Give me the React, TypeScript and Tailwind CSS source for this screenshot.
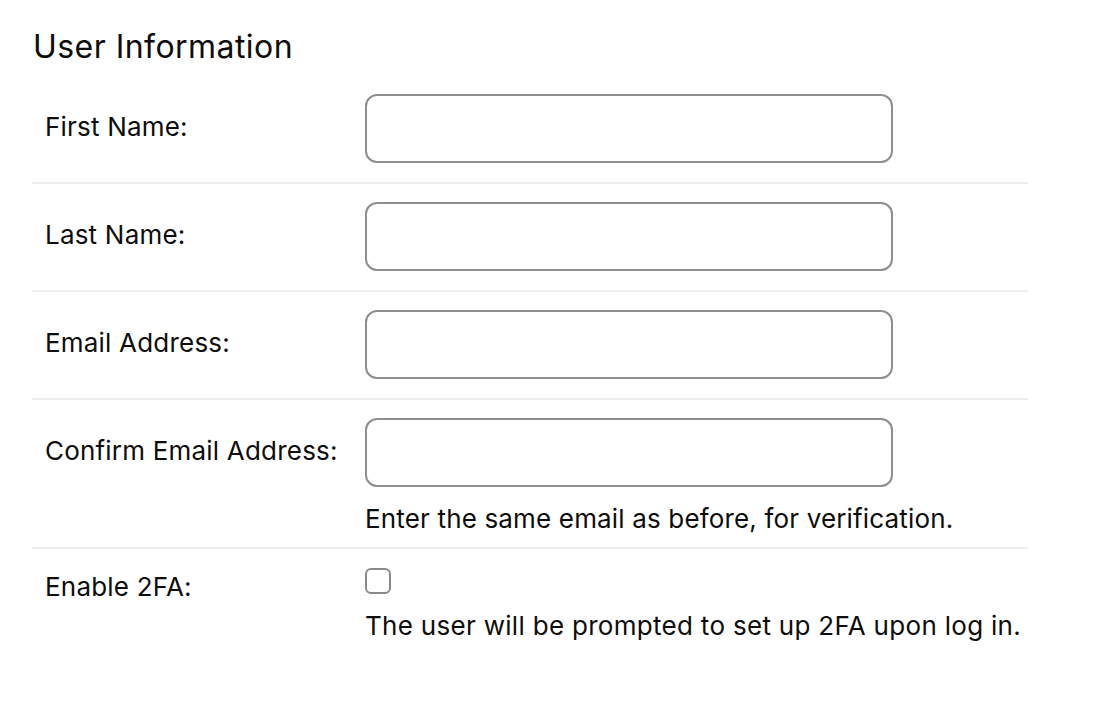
type Field = {
  label: string;
  help?: string;
};

const TEXT_FIELDS: Field[] = [
  { label: "First Name:" },
  { label: "Last Name:" },
  { label: "Email Address:" },
  {
    label: "Confirm Email Address:",
    help: "Enter the same email as before, for verification.",
  },
];

function TextRow({ label, help }: Field) {
  return (
    <div
      className={`grid grid-cols-[333px_1fr] border-b-2 border-[#ededed] pt-[18px] ${
        help ? "pb-[12px]" : "pb-[19px]"
      }`}
    >
      <label className="pl-[13px] pt-[17px] text-[26px] leading-[32px] tracking-[0.2px] text-[#0d0d0d]">
        {label}
      </label>
      <div className="flex flex-col">
        <input
          type="text"
          className="h-[69px] w-[528px] rounded-[12px] border-2 border-[#8e8e8e] bg-white px-3 text-[24px] outline-none"
        />
        {help ? (
          <p className="mt-[16px] text-[26px] leading-[32px] tracking-[0.16px] text-[#0d0d0d]">
            {help}
          </p>
        ) : null}
      </div>
    </div>
  );
}

export default function App() {
  return (
    <div className="min-h-screen bg-white pl-8 pt-[27px] font-['Inter','Liberation_Sans',sans-serif]">
      <div className="w-[996px]">
        <h2 className="pl-[1px] text-[32px] leading-[40px] tracking-[0.45px] text-[#0d0d0d]">
          User Information
        </h2>
        <div className="mt-[9px]">
          {TEXT_FIELDS.map((field) => (
            <TextRow key={field.label} {...field} />
          ))}
          <div className="grid grid-cols-[333px_1fr] pt-[19px]">
            <label className="pl-[13px] pt-[3px] text-[26px] leading-[32px] tracking-[0.2px] text-[#0d0d0d]">
              Enable 2FA:
            </label>
            <div className="flex flex-col">
              <span className="block size-[26px] rounded-[6px] border-2 border-[#8a8a8a] bg-white" />
              <p className="mt-[16px] text-[26px] leading-[32px] tracking-[0.3px] text-[#0d0d0d]">
                The user will be prompted to set up 2FA upon log in.
              </p>
            </div>
          </div>
        </div>
      </div>
    </div>
  );
}
